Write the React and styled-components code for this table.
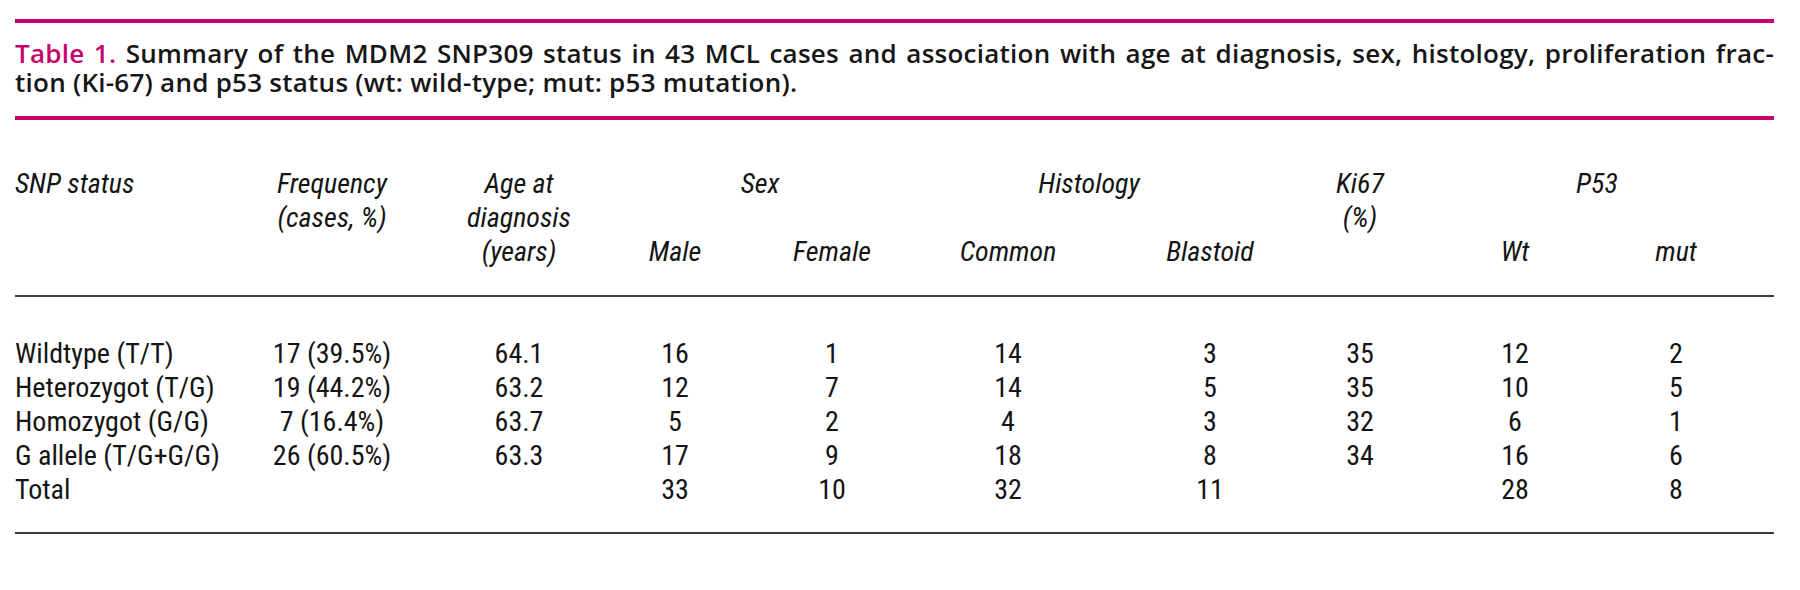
import React from 'react';
import styled, { createGlobalStyle } from 'styled-components';

const GlobalStyle = createGlobalStyle`
  html, body {
    margin: 0;
    padding: 0;
    background: #fff;
  }
`;

// column tracks: label, frequency, age, male, female, common, blastoid, ki67, wt, mut, right gutter
const COLS = '221px 192px 182px 130px 184px 168px 236px 64px 246px 76px 1fr';

const Page = styled.div`
  width: 1759px;
  padding: 19px 0 0 15px;
  color: #141414;
`;

const PinkRule = styled.div`
  height: 4px;
  background: #c8006a;
  margin-top: ${p => p.$top || 0}px;
`;

const GreyRule = styled.div`
  height: 2px;
  background: #3c3c3c;
  margin-top: ${p => p.$top || 0}px;
`;

const Caption = styled.div`
  margin-top: 16px;
  font-family: "Open Sans", Roboto, sans-serif;
  font-weight: 600;
  font-size: 26px;
  line-height: 29px;
  letter-spacing: 0.25px;
  color: #161616;
`;

const CaptionLine = styled.div`
  white-space: nowrap;
  text-align: ${p => (p.$justify ? 'justify' : 'left')};
  text-align-last: ${p => (p.$justify ? 'justify' : 'left')};
`;

const Label = styled.span`
  color: #c8006a;
`;

const Grid = styled.div`
  display: grid;
  grid-template-columns: ${COLS};
  grid-auto-rows: 34px;
  margin-top: ${p => p.$top}px;
  font-family: Roboto, "Roboto Condensed", "DejaVu Sans Condensed", sans-serif;
  font-stretch: 80%;
  font-size: 28px;
  line-height: 34px;
`;

const HeadCell = styled.div`
  grid-column: ${p => p.$col} / span ${p => p.$span || 1};
  grid-row: ${p => p.$row} / span ${p => p.$rows || 1};
  font-style: italic;
  white-space: nowrap;
  text-align: ${p => (p.$left ? 'left' : 'center')};
  padding-left: ${p => p.$padL || 0}px;
  padding-right: ${p => p.$padR || 0}px;
`;

const Cell = styled.div`
  text-align: ${p => (p.$left ? 'left' : 'center')};
  white-space: nowrap;
`;

const ROWS = [
  ['Wildtype (T/T)', '17 (39.5%)', '64.1', '16', '1', '14', '3', '35', '12', '2'],
  ['Heterozygot (T/G)', '19 (44.2%)', '63.2', '12', '7', '14', '5', '35', '10', '5'],
  ['Homozygot (G/G)', '7 (16.4%)', '63.7', '5', '2', '4', '3', '32', '6', '1'],
  ['G allele (T/G+G/G)', '26 (60.5%)', '63.3', '17', '9', '18', '8', '34', '16', '6'],
  ['Total', '', '', '33', '10', '32', '11', '', '28', '8'],
];

const App = () => (
  <Page>
    <GlobalStyle />
    <PinkRule />
    <Caption>
      <CaptionLine $justify>
        <Label>Table 1.</Label> Summary of the MDM2 SNP309 status in 43 MCL cases and association with age at diagnosis, sex, histology, proliferation frac-
      </CaptionLine>
      <CaptionLine>tion (Ki-67) and p53 status (wt: wild-type; mut: p53 mutation).</CaptionLine>
    </Caption>
    <PinkRule $top={19} />

    <Grid $top={47}>
      <HeadCell $col={1} $row={1} $left>SNP status</HeadCell>
      <HeadCell $col={2} $row={1} $rows={2}>Frequency<br />(cases, %)</HeadCell>
      <HeadCell $col={3} $row={1} $rows={3}>Age at<br />diagnosis<br />(years)</HeadCell>
      <HeadCell $col={4} $row={1} $span={2} $padR={14}>Sex</HeadCell>
      <HeadCell $col={4} $row={3}>Male</HeadCell>
      <HeadCell $col={5} $row={3}>Female</HeadCell>
      <HeadCell $col={6} $row={1} $span={2} $padR={74}>Histology</HeadCell>
      <HeadCell $col={6} $row={3}>Common</HeadCell>
      <HeadCell $col={7} $row={3}>Blastoid</HeadCell>
      <HeadCell $col={8} $row={1} $rows={2}>Ki67<br />(%)</HeadCell>
      <HeadCell $col={9} $row={1} $span={2} $padL={88}>P53</HeadCell>
      <HeadCell $col={9} $row={3}>Wt</HeadCell>
      <HeadCell $col={10} $row={3}>mut</HeadCell>
    </Grid>
    <GreyRule $top={26} />

    <Grid $top={40}>
      {ROWS.map(row => (
        <React.Fragment key={row[0]}>
          {row.map((v, i) => (
            <Cell key={i} $left={i === 0}>{v}</Cell>
          ))}
          <Cell />
        </React.Fragment>
      ))}
    </Grid>
    <GreyRule $top={25} />
  </Page>
);

export default App;
